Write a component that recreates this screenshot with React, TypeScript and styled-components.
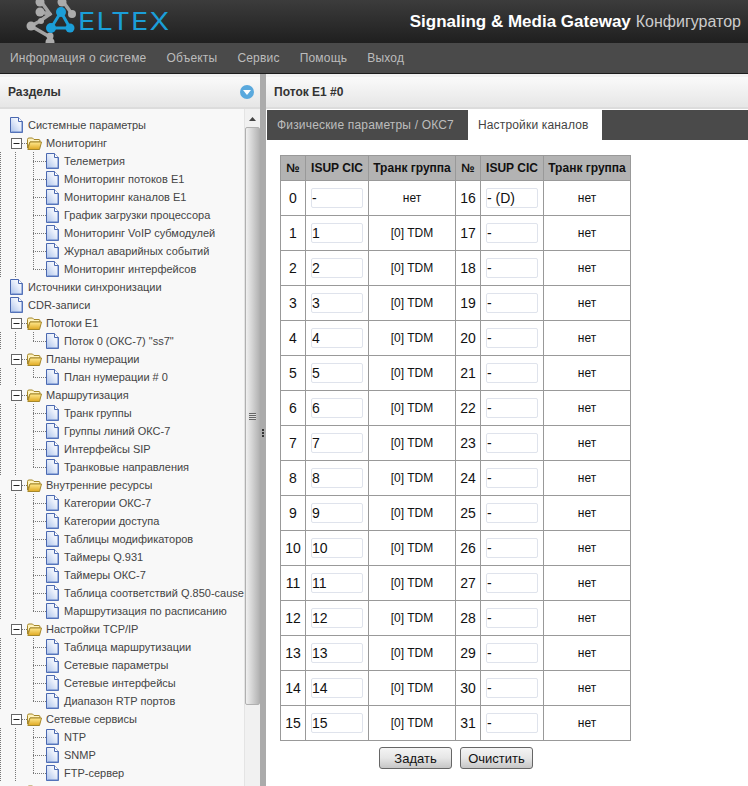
import React from "react";
import styled, { createGlobalStyle } from "styled-components";

const Global = createGlobalStyle`
  html, body { margin: 0; padding: 0; height: 100%; overflow: hidden; background: #fff; }
  body { font-family: "Liberation Sans", Arial, sans-serif; font-size: 12px; color: #222; }
  #root { height: 100%; }
  * { box-sizing: border-box; }
`;

const Page = styled.div`
  width: 748px; height: 786px; display: flex; flex-direction: column; overflow: hidden;
`;
const Header = styled.header`
  height: 43px; flex: none; display: flex; align-items: center; justify-content: space-between;
  background: linear-gradient(#3c3c3c, #1f1f1f); padding: 0 7px 0 26px; overflow: hidden;
`;
const Logo = styled.div`display: flex; align-items: center; gap: 0; height: 43px;`;
const LogoWord = styled.span`
  font-family: "Inter", "Liberation Sans", sans-serif; font-size: 24px; font-weight: 400;
  color: #1b9ed8; letter-spacing: 1px; line-height: 1; display: inline-block;
  transform: scaleX(1.2); transform-origin: left center;
`;
const Title = styled.div`font-size: 16px; color: #ccc; white-space: nowrap;`;
const TitleStrong = styled.b`color: #fff; font-size: 17px; font-weight: 700; margin-right: 5px;`;
const Nav = styled.nav`
  height: 31px; flex: none; display: flex; align-items: center; gap: 20px; padding: 0 0 0 10px;
  background: #4a4a4a; border-bottom: 1px solid #1c1c1c; color: #bcbcbc; letter-spacing: 0.2px;
`;
const Body = styled.div`flex: 1; min-height: 0; display: flex;`;
const Side = styled.aside`width: 260px; flex: none; display: flex; flex-direction: column; background: #f8f8f8;`;
const PanelHead = styled.div`
  height: 35px; flex: none; display: flex; align-items: center; justify-content: space-between;
  padding: 0 6px 0 8px; background: linear-gradient(#fafafa, #e6e6e6);
  border-bottom: 2px solid #dcdcdc; border-top: 3px solid #f2f2f2;
`;
const SideTitle = styled.b`font-size: 12px; color: #333;`;
const Collapse = styled.span`
  width: 14px; height: 14px; border-radius: 50%; background: #5aa9dd; display: flex; align-items: center; justify-content: center;
`;
const SideBody = styled.div`flex: 1; min-height: 0; display: flex; overflow: hidden;`;
const Tree = styled.div`flex: 1; min-width: 0; padding-top: 7px; overflow: hidden;`;
const Row = styled.div`
  height: 18px; display: flex; align-items: center; white-space: nowrap; overflow: hidden;
`;
const RowText = styled.span<{ $gap: number }>`
  font-size: 11px; color: #444; margin-left: ${(p) => p.$gap}px;
`;
const Guide = styled.span<{ $w: number; $on?: boolean }>`
  width: ${(p) => p.$w}px; height: 18px; flex: none;
  background: ${(p) => p.$on ? "repeating-linear-gradient(#777 0 1px, transparent 1px 2px) 0 0 / 1px 100% no-repeat" : "none"};
`;
const Connector = styled.span<{ $last?: boolean }>`
  width: 13px; height: 18px; flex: none;
  background:
    repeating-linear-gradient(#777 0 1px, transparent 1px 2px) 0 0 / 1px ${(p) => (p.$last ? "9px" : "100%")} no-repeat,
    repeating-linear-gradient(90deg, #777 0 1px, transparent 1px 2px) 0 9px / 100% 1px no-repeat;
`;
const Stub = styled.span`
  width: 5px; height: 18px; flex: none;
  background: repeating-linear-gradient(90deg, #777 0 1px, transparent 1px 2px) 0 9px / 100% 1px no-repeat;
`;
const Scroll = styled.div`width: 16px; flex: none; display: flex; flex-direction: column; background: #f1f1f1; border-left: 1px solid #e4e4e4;`;
const ScrollUp = styled.div`height: 18px; flex: none; display: flex; align-items: center; justify-content: center; padding-top: 1px;`;
const Thumb = styled.div`
  height: 578px; flex: none; display: flex; align-items: center; justify-content: center;
  background: linear-gradient(90deg, #f0f0f0, #d8d8d8 40%, #b4b4b4); border: 1px solid #b0b0b0; border-radius: 2px;
`;
const Grip = styled.span`
  width: 7px; height: 7px; background: repeating-linear-gradient(#666 0 1px, #ddd 1px 2px);
`;
const Splitter = styled.div`
  width: 6px; flex: none; background: #ababab; display: flex; align-items: center; justify-content: center; padding-top: 6px;
`;
const SplitDots = styled.span`width: 2px; height: 8px; background: repeating-linear-gradient(#333 0 2px, transparent 2px 3px);`;
const Main = styled.main`flex: 1; min-width: 0; display: flex; flex-direction: column; background: #fff;`;
const Tabs = styled.div`height: 30px; flex: none; margin: 1px 0 0 1px; display: flex; background: #4a4a4a; letter-spacing: 0.17px;`;
const Tab = styled.div<{ $active?: boolean }>`
  display: flex; align-items: center; padding: 0 ${(p) => (p.$active ? 13 : 14)}px 0 10px;
  background: ${(p) => (p.$active ? "#fff" : "transparent")};
  color: ${(p) => (p.$active ? "#444" : "#bdbdbd")};
`;
const Content = styled.div`flex: 1; padding: 15px 0 0 14px; display: flex; flex-direction: column;`;
const Table = styled.table`border-collapse: collapse; table-layout: fixed; width: 351px; color: #111;`;
const Th = styled.th<{ $w: number }>`
  width: ${(p) => p.$w}px; height: 25px; padding: 0; background: #b3b3b3; border: 1px solid #999;
  font-size: 12px; font-weight: 700; color: #111;
`;
const Td = styled.td`height: 35px; padding: 0; border: 1px solid #999; text-align: center; font-size: 12px;`;
const NumTd = styled(Td)`font-size: 14px;`;
const Field = styled.input`
  display: block; width: 52px; height: 20px; margin: 0 auto; padding: 0; font: 14px "Liberation Sans", Arial, sans-serif;
  color: #111; background: #fff; border: 1px solid #dfe3ec; border-radius: 2px; outline: none;
`;
const Actions = styled.div`display: flex; justify-content: flex-start; gap: 8px; padding: 6px 0 0 99px;`;
const Btn = styled.button`
  width: 73px; height: 22px; padding: 0; font: 13px "Liberation Sans", Arial, sans-serif; color: #111;
  background: linear-gradient(#f4f4f4, #e6e6e6 50%, #c6c6c6); border: 1px solid #666; border-radius: 3px;
`;

const PageIcon = () => (
  <svg width="13" height="16" viewBox="0 0 13 16" style={{ flex: "none" }}>
    <defs>
      <linearGradient id="pg" x1="0" y1="1" x2="1" y2="0">
        <stop offset="0" stopColor="#a9c0ea" />
        <stop offset="0.6" stopColor="#eaf0fb" />
        <stop offset="1" stopColor="#fff" />
      </linearGradient>
    </defs>
    <path d="M.5.5H8.5L12.5 4.5V15.5H.5Z" fill="url(#pg)" stroke="#4a68b0" strokeWidth="1" />
    <path d="M8.5.5V4.5H12.5" fill="#fff" stroke="#4a68b0" />
    <path d="M12 5V15H1.5" fill="none" stroke="#5f7fc4" />
  </svg>
);
const FolderIcon = () => (
  <svg width="15" height="13" viewBox="0 0 15 13" style={{ flex: "none" }}>
    <defs>
      <linearGradient id="fd" x1="0" y1="0" x2="0" y2="1">
        <stop offset="0" stopColor="#ffe98f" />
        <stop offset="1" stopColor="#dfa821" />
      </linearGradient>
    </defs>
    <path d="M.5 2.5Q.5 1 2 1H5.5L7 2.5H12Q13 2.5 13 4V5H3L.5 11Z" fill="#fff3bd" stroke="#a5872a" />
    <path d="M.8 12.5L3 5H14.5L12.5 12.5Z" fill="url(#fd)" stroke="#a5872a" />
  </svg>
);
const MinusBox = () => (
  <svg width="11" height="11" viewBox="0 0 11 11" style={{ flex: "none" }}>
    <rect x=".5" y=".5" width="10" height="10" fill="#fff" stroke="#666" />
    <path d="M2.5 5.5H8.5" stroke="#222" />
  </svg>
);
const ArrowDown = () => (
  <svg width="8" height="5" viewBox="0 0 8 5"><path d="M0 0H8L4 5Z" fill="#fff" /></svg>
);
const ArrowUp = () => (
  <svg width="7" height="4" viewBox="0 0 7 4"><path d="M0 4H7L3.5 0Z" fill="#444" /></svg>
);
const EltexMark = () => (
  <svg width="52" height="43" viewBox="0 0 52 43" style={{ flex: "none" }}>
    <g stroke="#a3a3a3" strokeWidth="3.5" fill="none" strokeLinecap="round">
      <path d="M14 0L24 14L14 21L5 26L24 37V43" />
      <path d="M14 12L24 14" />
      <path d="M36 0L46 14" />
    </g>
    <g fill="#ababab">
      <circle cx="14" cy="2" r="4.5" />
      <circle cx="14" cy="12" r="4.5" />
      <circle cx="5" cy="26" r="4.5" />
      <circle cx="15" cy="21" r="3" />
      <circle cx="24" cy="36" r="3.5" />
      <circle cx="24" cy="42" r="4.5" />
      <circle cx="36" cy="2" r="4.5" />
      <circle cx="46" cy="14" r="4" />
    </g>
    <g stroke="#1b9ed8" strokeWidth="3" fill="none" strokeLinejoin="round">
      <path d="M35 12L25 28H44Z" />
    </g>
    <g fill="#1b9ed8">
      <circle cx="35" cy="12" r="5" />
      <circle cx="25" cy="28" r="5" />
      <circle cx="44" cy="28" r="4.5" />
    </g>
  </svg>
);

type N = { t: string; k: "page" | "folder"; kids?: string[] };
const tree: N[] = [
  { t: "Системные параметры", k: "page" },
  { t: "Мониторинг", k: "folder", kids: ["Телеметрия", "Мониторинг потоков Е1", "Мониторинг каналов Е1", "График загрузки процессора", "Мониторинг VoIP субмодулей", "Журнал аварийных событий", "Мониторинг интерфейсов"] },
  { t: "Источники синхронизации", k: "page" },
  { t: "CDR-записи", k: "page" },
  { t: "Потоки Е1", k: "folder", kids: ["Поток 0 (ОКС-7) \"ss7\""] },
  { t: "Планы нумерации", k: "folder", kids: ["План нумерации # 0"] },
  { t: "Маршрутизация", k: "folder", kids: ["Транк группы", "Группы линий ОКС-7", "Интерфейсы SIP", "Транковые направления"] },
  { t: "Внутренние ресурсы", k: "folder", kids: ["Категории ОКС-7", "Категории доступа", "Таблицы модификаторов", "Таймеры Q.931", "Таймеры ОКС-7", "Таблица соответствий Q.850-cause", "Маршрутизация по расписанию"] },
  { t: "Настройки TCP/IP", k: "folder", kids: ["Таблица маршрутизации", "Сетевые параметры", "Сетевые интерфейсы", "Диапазон RTP портов"] },
  { t: "Сетевые сервисы", k: "folder", kids: ["NTP", "SNMP", "FTP-сервер"] },
];

const channels = Array.from({ length: 16 }, (_, i) => i);

export default function App() {
  return (
    <Page>
      <Global />
      <Header>
        <Logo>
          <EltexMark />
          <LogoWord>ELTEX</LogoWord>
        </Logo>
        <Title><TitleStrong>Signaling &amp; Media Gateway</TitleStrong>Конфигуратор</Title>
      </Header>
      <Nav>
        {["Информация о системе", "Объекты", "Сервис", "Помощь", "Выход"].map((n) => <span key={n}>{n}</span>)}
      </Nav>
      <Body>
        <Side>
          <PanelHead>
            <SideTitle>Разделы</SideTitle>
            <Collapse><ArrowDown /></Collapse>
          </PanelHead>
          <SideBody>
            <Tree>
              {tree.map((n) => (
                <React.Fragment key={n.t}>
                  {n.k === "page" ? (
                    <Row><Guide $w={10} /><PageIcon /><RowText $gap={5}>{n.t}</RowText></Row>
                  ) : (
                    <Row>
                      <Guide $w={11} /><MinusBox /><Stub />
                      <FolderIcon /><RowText $gap={4}>{n.t}</RowText>
                    </Row>
                  )}
                  {n.kids?.map((k, i) => (
                    <Row key={k}>
                      <Guide $w={15} $on /><Guide $w={18} $on /><Connector $last={i === n.kids!.length - 1} />
                      <PageIcon /><RowText $gap={5}>{k}</RowText>
                    </Row>
                  ))}
                </React.Fragment>
              ))}
              <Row><Guide $w={11} /><MinusBox /><Stub /><FolderIcon /></Row>
            </Tree>
            <Scroll>
              <ScrollUp><ArrowUp /></ScrollUp>
              <Thumb><Grip /></Thumb>
            </Scroll>
          </SideBody>
        </Side>
        <Splitter><SplitDots /></Splitter>
        <Main>
          <PanelHead><SideTitle>Поток E1 #0</SideTitle></PanelHead>
          <Tabs>
            <Tab>Физические параметры / ОКС7</Tab>
            <Tab $active>Настройки каналов</Tab>
          </Tabs>
          <Content>
            <Table>
              <thead>
                <tr>
                  <Th $w={25}>№</Th><Th $w={63}>ISUP CIC</Th><Th $w={87}>Транк группа</Th>
                  <Th $w={25}>№</Th><Th $w={63}>ISUP CIC</Th><Th $w={87}>Транк группа</Th>
                </tr>
              </thead>
              <tbody>
                {channels.map((i) => (
                  <tr key={i}>
                    <NumTd>{i}</NumTd>
                    <Td><Field readOnly value={i === 0 ? "-" : String(i)} /></Td>
                    <Td>{i === 0 ? "нет" : "[0] TDM"}</Td>
                    <NumTd>{i + 16}</NumTd>
                    <Td><Field readOnly value={i === 0 ? "- (D)" : "-"} /></Td>
                    <Td>нет</Td>
                  </tr>
                ))}
              </tbody>
            </Table>
            <Actions>
              <Btn>Задать</Btn>
              <Btn>Очистить</Btn>
            </Actions>
          </Content>
        </Main>
      </Body>
    </Page>
  );
}
